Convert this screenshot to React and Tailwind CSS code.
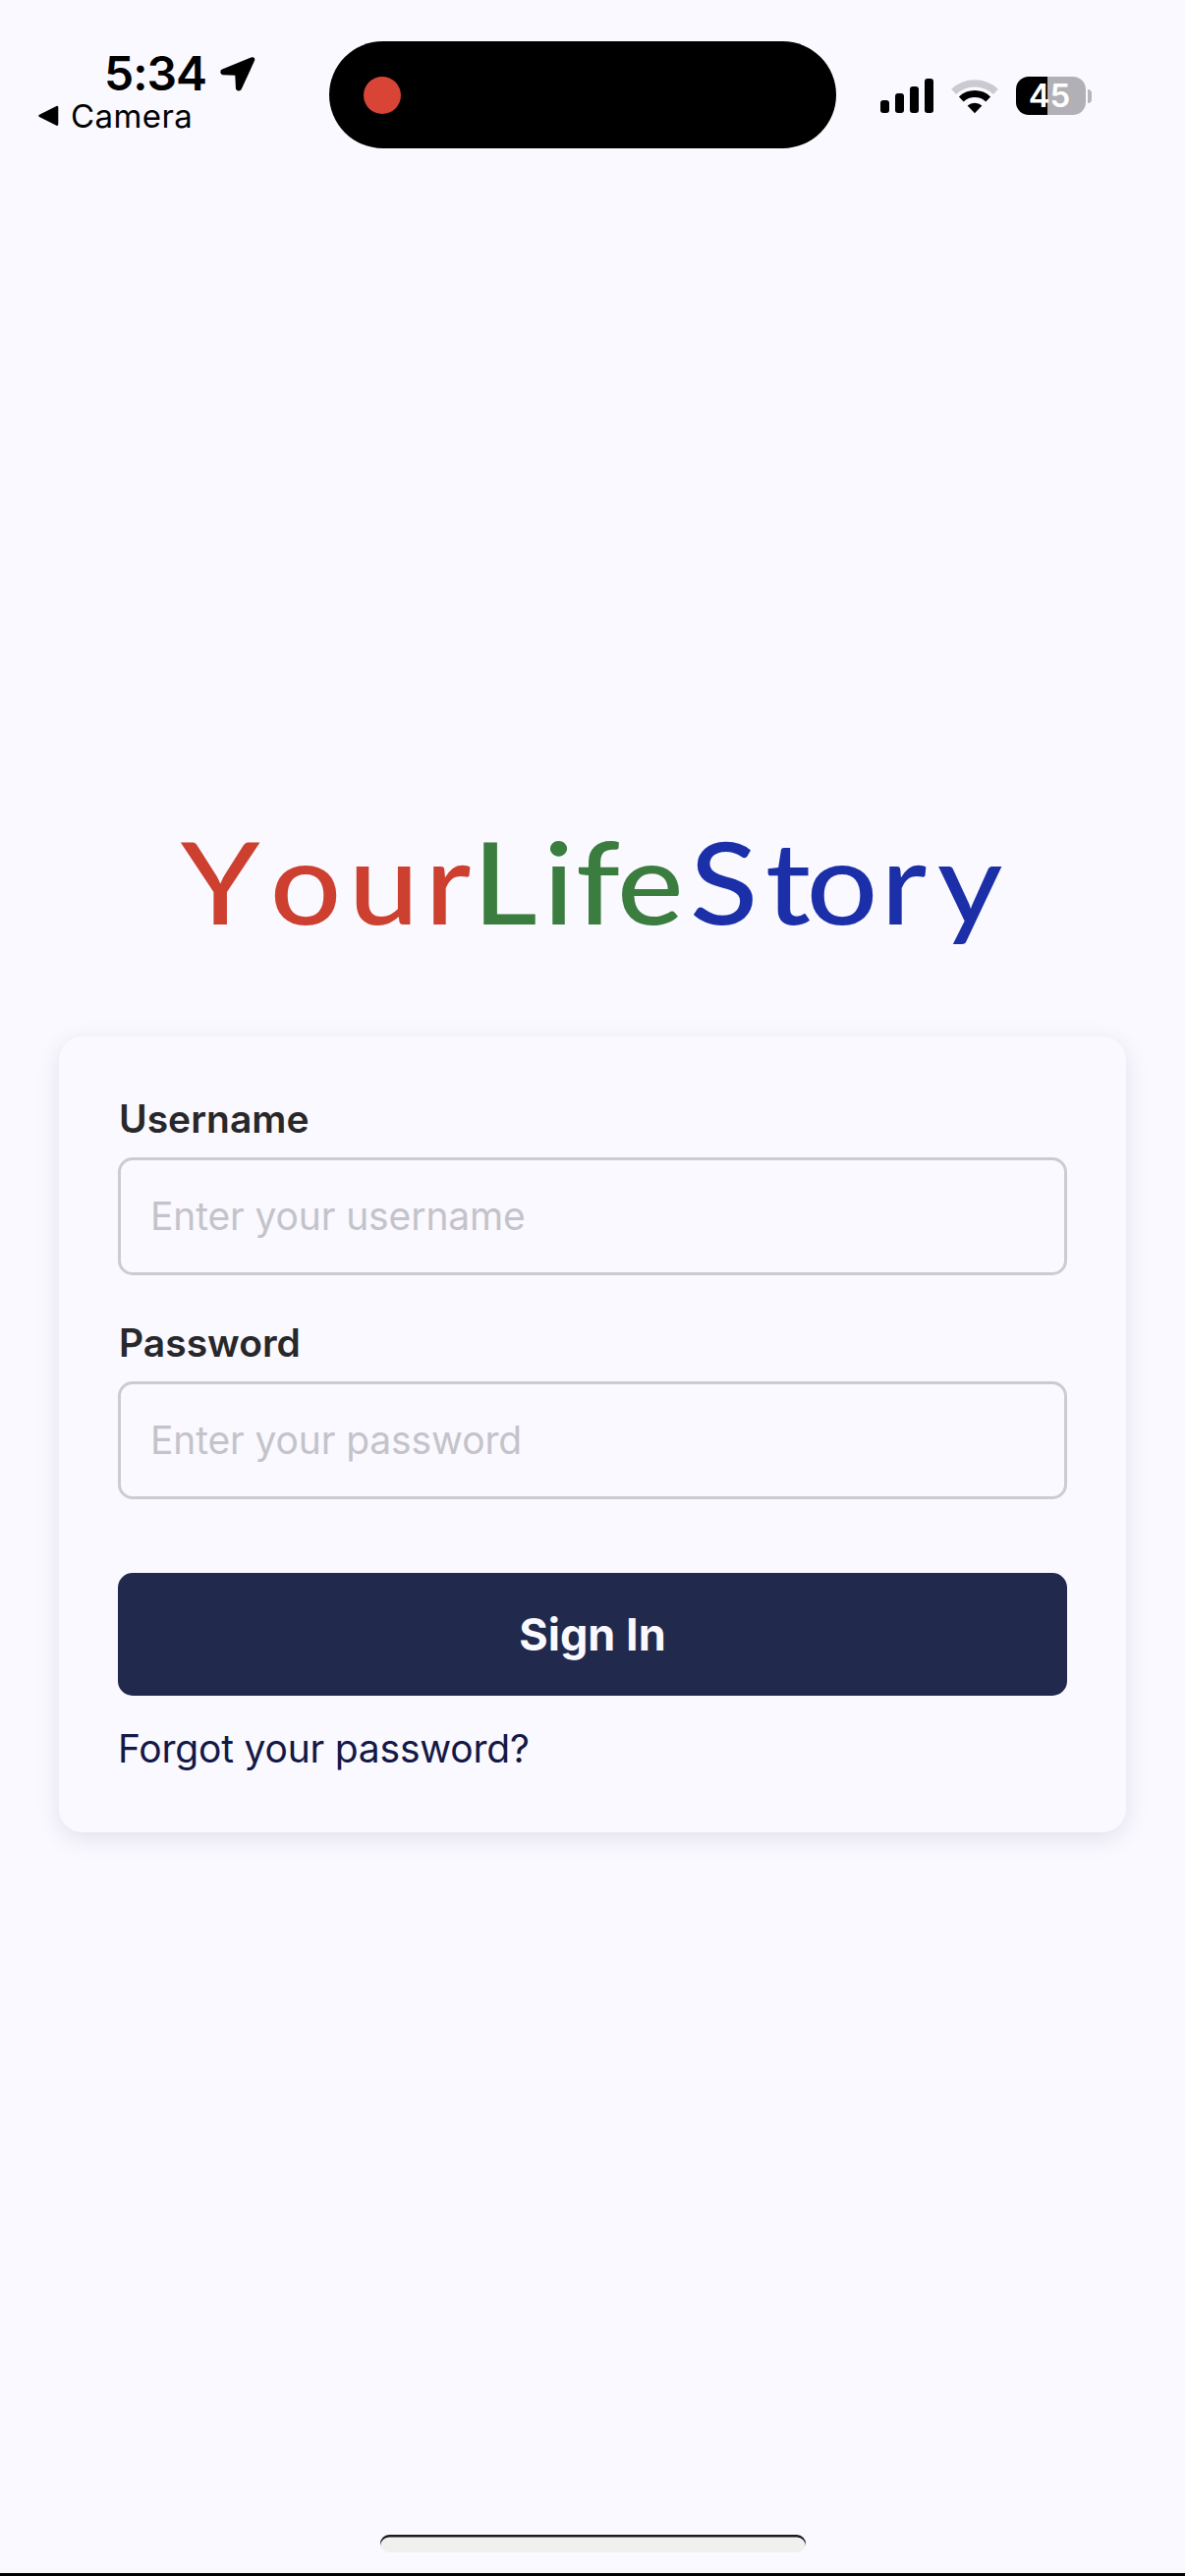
import React from "react";

const LOGO = [
  {
    color: "text-[#cd4030]",
    letters: [["Y", 82.5], ["o", 72.8], ["u", 70.6], ["r", 44.1]],
  },
  {
    color: "text-[#3a7d3f]",
    letters: [["L", 65.5], ["i", 30], ["f", 38.2], ["e", 67.2]],
  },
  {
    color: "text-[#1b2fa8]",
    letters: [["S", 70], ["t", 37.9], ["o", 68.9], ["r", 52.4], ["y", 60]],
  },
];

function StatusBar() {
  return (
    <header className="grid h-[180px] grid-cols-[335px_516px_355px] text-black">
      <div className="pt-[52px]">
        <div className="flex h-[46px] items-start pl-[106px]">
          <span className="w-[117px] text-[48px] leading-[46px] font-semibold tracking-[-1px]">5:34</span>
          <svg className="mt-[5px] h-[37px] w-[38px]" viewBox="0 0 38 37">
            <path
              d="M33.5 2.5 L3 14.8 Q1.8 17.5 4 18 L17.5 18.6 L18.2 33 Q19.5 35.2 21.5 33.6 L35 4 Q35.2 2 33.5 2.5Z"
              fill="currentColor"
              stroke="currentColor"
              strokeWidth="2.5"
              strokeLinejoin="round"
            />
          </svg>
        </div>
        <div className="mt-[4px] flex items-center pl-[38px]">
          <svg className="h-[22px] w-[22px]" viewBox="0 0 22 22">
            <path d="M2.6 10.8 L20 2.2 V19.6Z" fill="currentColor" stroke="currentColor" strokeWidth="2.6" strokeLinejoin="round" />
          </svg>
          <span className="ml-[12px] text-[33px] leading-[32px] tracking-[0.4px]">Camera</span>
        </div>
      </div>
      <div className="mt-[42px] flex h-[109px] items-center rounded-full bg-black pl-[35px]">
        <span className="size-[38px] rounded-full bg-[#d84436]" />
      </div>
      <div className="flex h-[118px] items-end pl-[45px]">
        <div className="mb-[3px] flex items-end gap-[6px]">
          <span className="h-[13px] w-[9px] rounded-[3px] bg-black" />
          <span className="h-[20px] w-[9px] rounded-[3px] bg-black" />
          <span className="h-[27px] w-[9px] rounded-[3px] bg-black" />
          <span className="h-[35px] w-[9px] rounded-[3px] bg-black" />
        </div>
        <svg className="mb-[2px] ml-[17px] h-[37px] w-[50px]" viewBox="0 0 50 37">
          <path d="M3.6 14.4 A31 31 0 0 1 46.4 14.4" fill="none" stroke="#cbcad0" strokeWidth="7.2" />
          <path d="M11.3 22 A20 20 0 0 1 38.7 22" fill="none" stroke="#000" strokeWidth="7" />
          <path d="M17.6 28.6 A11 11 0 0 1 32.4 28.6 L25 36.2Z" fill="#000" />
        </svg>
        <div className="mb-px ml-[17px] flex h-[39px] w-[71px] items-center justify-center rounded-[13px] bg-[linear-gradient(90deg,#000_45%,#b1b0b6_45%)]">
          <span className="-ml-[3px] text-[33px] leading-[39px] font-semibold text-white">45</span>
        </div>
        <span className="mb-[13px] ml-[2px] h-[14px] w-[4px] rounded-r-full bg-[#b6b5bb]" />
      </div>
    </header>
  );
}

function Logo() {
  return (
    <h1 className="ml-[184px] flex h-[140px] w-[760px] origin-left scale-x-110 font-['Lato',sans-serif] text-[116px] leading-[140px] font-medium">
      {LOGO.map((word) => (
        <span key={word.color} className={"flex " + word.color}>
          {word.letters.map(([ch, width], i) => (
            <span key={i} style={{ width }}>
              {ch}
            </span>
          ))}
        </span>
      ))}
    </h1>
  );
}

function Field({ label, placeholder, type }) {
  return (
    <label className="flex flex-col gap-[15px]">
      <span className="pl-px text-[39px] leading-[48px] font-semibold text-[#28282a]">{label}</span>
      <input
        type={type}
        placeholder={placeholder}
        className="h-[120px] w-full rounded-[15px] border-[3px] border-[#cccbd0] bg-transparent px-[30px] text-[39px] tracking-[-0.12px] placeholder:text-[#c4c3ca] placeholder:opacity-100"
      />
    </label>
  );
}

export default function App() {
  return (
    <div className="flex h-[2622px] w-[1206px] flex-col overflow-hidden border-b-[3px] border-black bg-[#faf9ff] font-['Inter',sans-serif]">
      <StatusBar />
      <main className="flex flex-1 flex-col pt-[647px]">
        <Logo />
        <form className="mx-[60px] mt-[87.5px] flex h-[810px] flex-col rounded-[24px] bg-[#faf9ff] p-[60px] shadow-[0_6px_24px_rgba(10,0,60,0.10)]">
          <div className="flex flex-col gap-[45px]">
            <Field label="Username" placeholder="Enter your username" type="text" />
            <Field label="Password" placeholder="Enter your password" type="password" />
          </div>
          <button
            type="button"
            className="mt-[75px] h-[125px] shrink-0 rounded-[15px] bg-[#21294c] pt-px text-[45px] font-bold text-[#faf9ff]"
          >
            Sign In
          </button>
          <a className="mt-[30px] text-[39px] leading-[48px] tracking-[-0.2px] text-[#141845]">Forgot your password?</a>
        </form>
      </main>
      <div className="mx-auto mb-[21px] h-[18px] w-[433px] shrink-0 rounded-full bg-[#f0f0ef] shadow-[inset_0_2.5px_0.5px_#1b1a20]" />
    </div>
  );
}
